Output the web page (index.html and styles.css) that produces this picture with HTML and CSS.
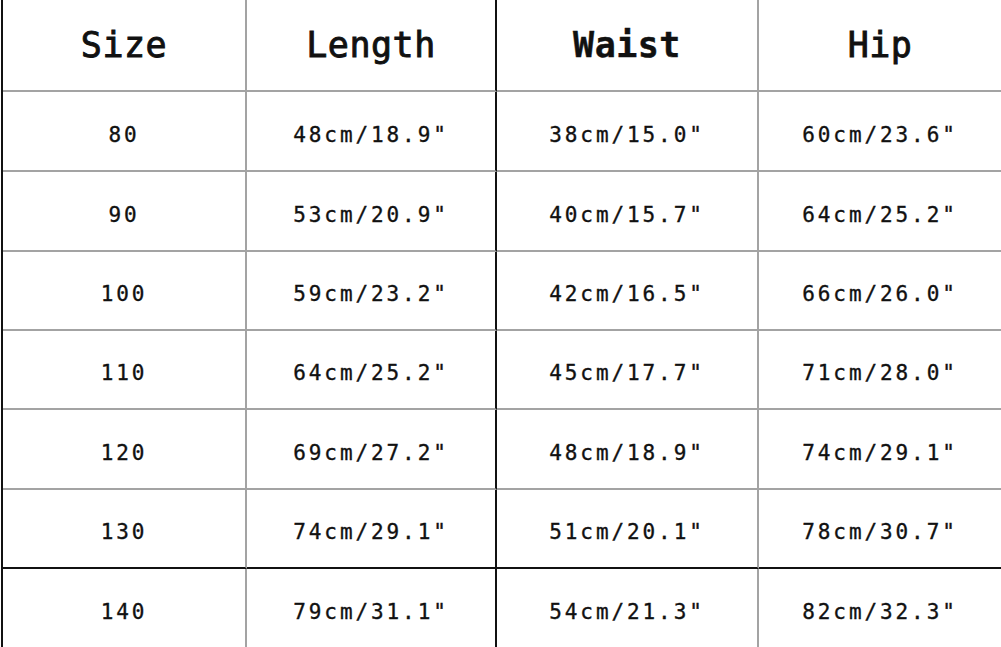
FILE: index.html
```html
<!DOCTYPE html>
<html>
<head>
<meta charset="utf-8">
<link rel="stylesheet" href="styles.css">
</head>
<body>
<div class="chart">
  <div class="cell head c1">Size</div>
  <div class="cell head c2">Length</div>
  <div class="cell head c3 bold">Waist</div>
  <div class="cell head c4">Hip</div>

  <div class="cell c1">80</div>
  <div class="cell c2">48cm/18.9"</div>
  <div class="cell c3">38cm/15.0"</div>
  <div class="cell c4">60cm/23.6"</div>

  <div class="cell c1">90</div>
  <div class="cell c2">53cm/20.9"</div>
  <div class="cell c3">40cm/15.7"</div>
  <div class="cell c4">64cm/25.2"</div>

  <div class="cell c1">100</div>
  <div class="cell c2">59cm/23.2"</div>
  <div class="cell c3">42cm/16.5"</div>
  <div class="cell c4">66cm/26.0"</div>

  <div class="cell c1">110</div>
  <div class="cell c2">64cm/25.2"</div>
  <div class="cell c3">45cm/17.7"</div>
  <div class="cell c4">71cm/28.0"</div>

  <div class="cell c1">120</div>
  <div class="cell c2">69cm/27.2"</div>
  <div class="cell c3">48cm/18.9"</div>
  <div class="cell c4">74cm/29.1"</div>

  <div class="cell c1 dark-bottom">130</div>
  <div class="cell c2 dark-bottom">74cm/29.1"</div>
  <div class="cell c3 dark-bottom">51cm/20.1"</div>
  <div class="cell c4 dark-bottom">78cm/30.7"</div>

  <div class="cell c1 last">140</div>
  <div class="cell c2 last">79cm/31.1"</div>
  <div class="cell c3 last">54cm/21.3"</div>
  <div class="cell c4 last">82cm/32.3"</div>
</div>
</body>
</html>
```
FILE: styles.css
```css
html, body {
  margin: 0;
  padding: 0;
  background: #fff;
}

.chart {
  margin-left: 1px;
  border-left: 2px solid #111;
  width: 998px;
  height: 647px;
  display: grid;
  grid-template-columns: 244px 250px 262px 1fr;
  grid-template-rows: 92px 80px 80px 79px 79px 80px 79px 78px;
  font-family: "DejaVu Sans Mono", "Liberation Mono", monospace;
  color: #111;
}

.cell {
  display: flex;
  align-items: center;
  justify-content: center;
  border-right: 2px solid #a3a3a3;
  border-bottom: 2px solid #a3a3a3;
  font-size: 21px;
  letter-spacing: 2.9px;
  padding-left: 0;
  padding-top: 7px;
  box-sizing: border-box;
  -webkit-text-stroke: 0.35px #111;
}

.cell.c2 {
  border-right-color: #111;
}

.cell.c4 {
  border-right: none;
}

.cell.head {
  font-size: 35px;
  letter-spacing: 0.5px;
  padding-top: 0;
  -webkit-text-stroke: 0.9px #111;
}

.cell.bold {
  font-weight: bold;
  -webkit-text-stroke: 0.4px #111;
}

.cell.dark-bottom {
  border-bottom-color: #111;
}

.cell.last {
  border-bottom: none;
}
```
